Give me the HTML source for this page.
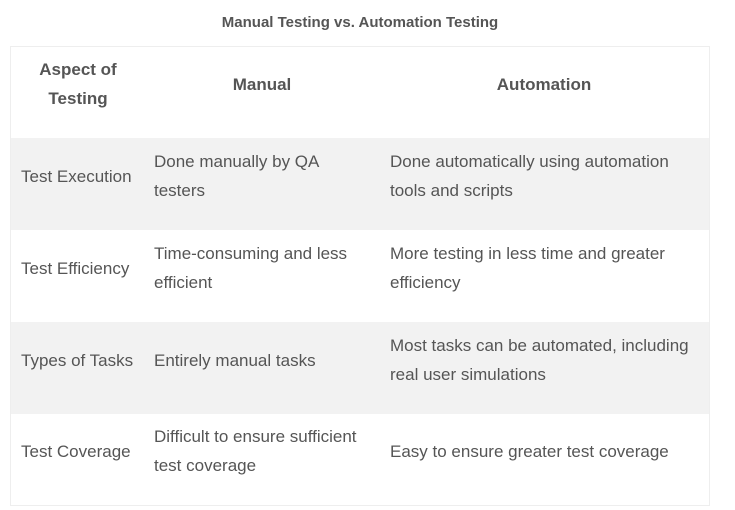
<!DOCTYPE html>
<html><head><style>
body{margin:0;width:735px;height:510px;background:#fff;font-family:"Liberation Sans",sans-serif;color:#555;position:relative;overflow:hidden}
.t{position:absolute;top:14px;left:0;width:720px;text-align:center;font-weight:bold;font-size:15px;color:#555}
.tb{position:absolute;left:10px;top:46px;width:700px;height:460px;border:1px solid #eee;box-sizing:border-box}
.r{position:absolute;left:11px;width:698px;height:92px}
.g{background:#f2f2f2}
.c{position:absolute;font-size:17px;line-height:29px;display:flex;align-items:center;height:92px;top:-8px}
.h{font-weight:bold;justify-content:center;text-align:center}
</style></head><body>
<div class="t">Manual Testing vs. Automation Testing</div>
<div class="tb"></div>
<div class="r" style="top:46px">
 <div class="c h" style="left:0;width:134px">Aspect of<br>Testing</div>
 <div class="c h" style="left:180px;width:142px">Manual</div>
 <div class="c h" style="left:380px;width:306px">Automation</div>
</div>
<div class="r g" style="top:138px">
 <div class="c" style="left:10px">Test Execution</div>
 <div class="c" style="left:143px;width:230px">Done manually by QA<br>testers</div>
 <div class="c" style="left:379px;width:315px">Done automatically using automation<br>tools and scripts</div>
</div>
<div class="r" style="top:230px">
 <div class="c" style="left:10px">Test Efficiency</div>
 <div class="c" style="left:143px;width:230px">Time-consuming and less<br>efficient</div>
 <div class="c" style="left:379px;width:315px">More testing in less time and greater<br>efficiency</div>
</div>
<div class="r g" style="top:322px">
 <div class="c" style="left:10px">Types of Tasks</div>
 <div class="c" style="left:143px;width:230px">Entirely manual tasks</div>
 <div class="c" style="left:379px;width:320px">Most tasks can be automated, including<br>real user simulations</div>
</div>
<div class="r" style="top:413px">
 <div class="c" style="left:10px">Test Coverage</div>
 <div class="c" style="left:143px;width:230px">Difficult to ensure sufficient<br>test coverage</div>
 <div class="c" style="left:379px;width:315px">Easy to ensure greater test coverage</div>
</div>
</body></html>
